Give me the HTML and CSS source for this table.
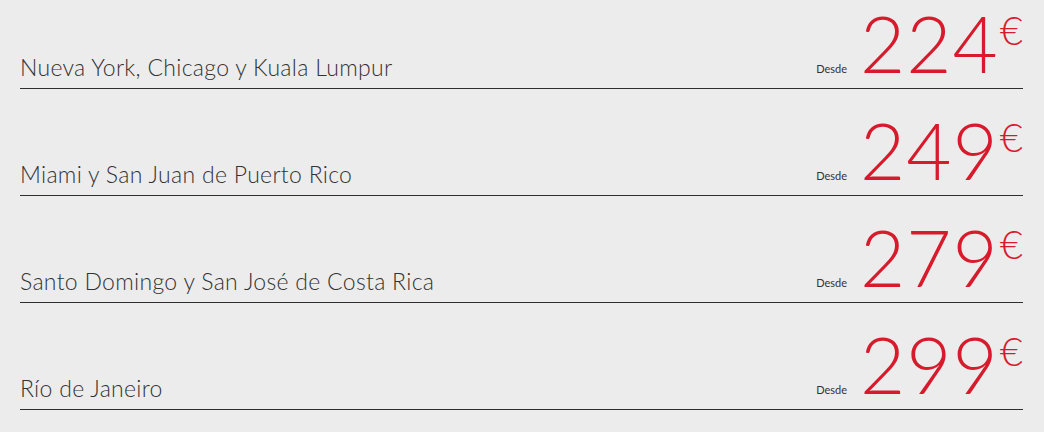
FILE: index.html
```html
<!DOCTYPE html>
<html lang="es">
<head>
  <meta charset="UTF-8">
  <title>Ofertas de vuelos</title>
  <link rel="stylesheet" href="styles.css">
</head>
<body>

  <ul class="fares">
    <li class="fare">
      <span class="city">Nueva York, Chicago y Kuala Lumpur</span>
      <span class="price">
        <span class="from">Desde</span>
        <span class="amount">224</span>
        <span class="currency">€</span>
      </span>
    </li>
    <li class="fare">
      <span class="city">Miami y San Juan de Puerto Rico</span>
      <span class="price">
        <span class="from">Desde</span>
        <span class="amount">249</span>
        <span class="currency">€</span>
      </span>
    </li>
    <li class="fare">
      <span class="city">Santo Domingo y San José de Costa Rica</span>
      <span class="price">
        <span class="from">Desde</span>
        <span class="amount">279</span>
        <span class="currency">€</span>
      </span>
    </li>
    <li class="fare">
      <span class="city">Río de Janeiro</span>
      <span class="price">
        <span class="from">Desde</span>
        <span class="amount">299</span>
        <span class="currency">€</span>
      </span>
    </li>
  </ul>

</body>
</html>
```

FILE: styles.css
```css
body {
  margin: 0;
  padding: 0 21px 0 20px;
  background-color: #ececec;
  font-family: Lato, 'Open Sans', sans-serif;
  color: #333;
}

.fares {
  list-style: none;
  margin: 0;
  padding: 4px 0 0;
}

.fare {
  display: flex;
  justify-content: space-between;
  align-items: flex-end;
  border-bottom: 1px solid #2e2e2e;
  padding-bottom: 6px;
  margin-bottom: 22px;
}

.city {
  font-size: 23px;
  font-weight: 300;
  line-height: 30px;
  letter-spacing: 0.3px;
}

.price {
  display: flex;
  align-items: baseline;
}

.from {
  font-size: 11px;
  margin-right: 13px;
}

.amount {
  font-size: 78px;
  font-weight: 300;
  line-height: 78px;
  letter-spacing: 1px;
  color: #d81b2c;
}

.currency {
  align-self: flex-start;
  font-size: 40px;
  font-weight: 300;
  line-height: 40px;
  color: #d81b2c;
  margin: 6px 0 0 1px;
}
```
